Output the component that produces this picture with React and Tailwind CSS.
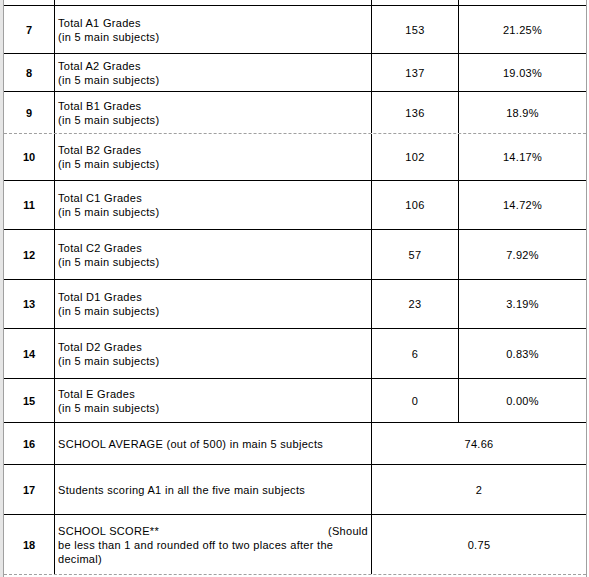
import React from 'react';

const gradeRows = [
  { n: 7, label: 'Total A1 Grades', count: '153', pct: '21.25%', h: 'h-[48px]' },
  { n: 8, label: 'Total A2 Grades', count: '137', pct: '19.03%', h: 'h-[38px]' },
  { n: 9, label: 'Total B1 Grades', count: '136', pct: '18.9%', h: 'h-[42px]' },
  { n: 10, label: 'Total B2 Grades', count: '102', pct: '14.17%', h: 'h-[47px]', dashed: true },
  { n: 11, label: 'Total C1 Grades', count: '106', pct: '14.72%', h: 'h-[49px]' },
  { n: 12, label: 'Total C2 Grades', count: '57', pct: '7.92%', h: 'h-[50px]' },
  { n: 13, label: 'Total D1 Grades', count: '23', pct: '3.19%', h: 'h-[49px]' },
  { n: 14, label: 'Total D2 Grades', count: '6', pct: '0.83%', h: 'h-[50px]' },
  { n: 15, label: 'Total E Grades', count: '0', pct: '0.00%', h: 'h-[44px]' },
];

const Num = ({ n }) => (
  <div className="w-[51px] shrink-0 border-r border-black flex items-center justify-center font-bold tracking-normal">
    {n}
  </div>
);

const App = () => {
  return (
    <div
      className="w-[589px] h-[577px] flex bg-white text-black text-[11px] leading-[14px] tracking-[0.3px] overflow-hidden"
      style={{ fontFamily: '"Liberation Sans", Arial, sans-serif' }}
    >
      {/* left margin strip */}
      <div className="w-[3px] bg-[#e6e6e6]" />
      <div className="w-px bg-[#a0a0a0]" />

      <div className="w-[582px] flex flex-col">
        {/* tail of the previous row */}
        <div className="flex h-[5px]">
          <div className="w-[51px] border-r border-black" />
          <div className="w-[317px] border-r border-black" />
          <div className="w-[87px] border-r border-black" />
          <div className="flex-1" />
        </div>

        {gradeRows.map((r) => (
          <div
            key={r.n}
            className={`flex ${r.h} border-t ${r.dashed ? 'border-dashed border-[#a0a0a0]' : 'border-black'}`}
          >
            <Num n={r.n} />
            <div className="w-[317px] shrink-0 border-r border-black flex flex-col justify-center pl-[3px]">
              <span>{r.label}</span>
              <span>(in 5 main subjects)</span>
            </div>
            <div className="w-[87px] shrink-0 border-r border-black flex items-center justify-center">
              {r.count}
            </div>
            <div className="flex-1 flex items-center justify-center">{r.pct}</div>
          </div>
        ))}

        <div className="flex h-[42px] border-t border-black">
          <Num n={16} />
          <div className="w-[317px] shrink-0 border-r border-black flex items-center pl-[3px]">
            SCHOOL AVERAGE (out of 500) in main 5 subjects
          </div>
          <div className="flex-1 flex items-center justify-center">74.66</div>
        </div>

        <div className="flex h-[50px] border-t border-black">
          <Num n={17} />
          <div className="w-[317px] shrink-0 border-r border-black flex items-center pl-[3px]">
            Students scoring A1 in all the five main subjects
          </div>
          <div className="flex-1 flex items-center justify-center">2</div>
        </div>

        <div className="flex h-[60px] border-t border-black">
          <Num n={18} />
          <div className="w-[317px] shrink-0 border-r border-black flex flex-col justify-center pl-[3px] pr-[3px] whitespace-nowrap">
            <div className="flex justify-between">
              <span>SCHOOL SCORE**</span>
              <span>(Should</span>
            </div>
            <span>be less than 1 and rounded off to two places after the</span>
            <span>decimal)</span>
          </div>
          <div className="flex-1 flex items-center justify-center">0.75</div>
        </div>

        <div className="border-t border-dashed border-[#a0a0a0]" />
      </div>

      <div className="w-px bg-[#a0a0a0]" />
      <div className="flex-1" />
    </div>
  );
};

export default App;
